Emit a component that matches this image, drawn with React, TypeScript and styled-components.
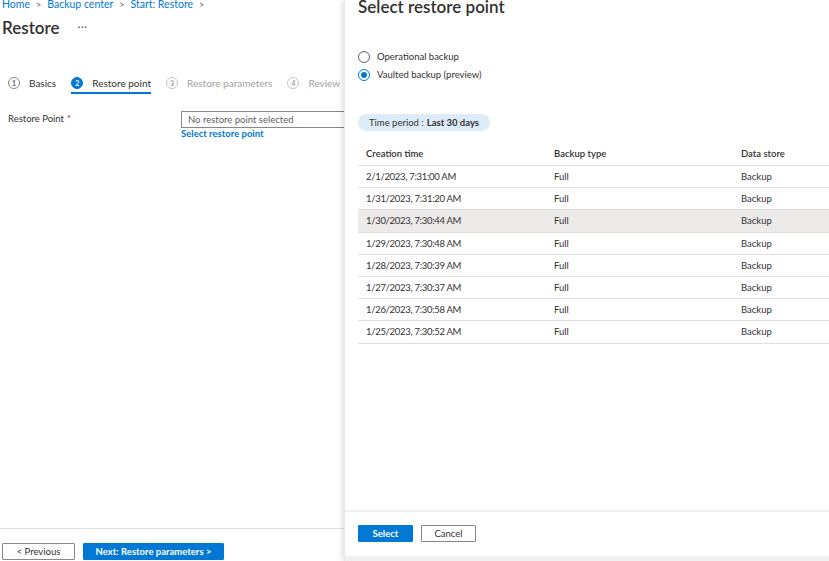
import React from "react";
import styled, { createGlobalStyle } from "styled-components";

const Global = createGlobalStyle`
  html, body { margin: 0; padding: 0; background: #fff; }
  body { font-family: "Segoe UI", Lato, "Open Sans", sans-serif; color: #323130; }
  * { box-sizing: border-box; }
`;

const Root = styled.div`
  display: flex;
  width: 829px;
  height: 561px;
  overflow: hidden;
  white-space: nowrap;
`;

const Left = styled.div`
  width: 344px;
  flex: none;
  display: flex;
  flex-direction: column;
`;

const Breadcrumb = styled.div`
  display: flex;
  align-items: center;
  gap: 6px;
  padding-left: 2px;
  margin-top: -4px;
  height: 16px;
  font-size: 10.5px;
  color: #0078d4;
`;

const Chevron = styled.span`
  color: #605e5c;
  font-size: 9px;
`;

const TitleRow = styled.div`
  display: flex;
  align-items: center;
  gap: 18px;
  padding-left: 2px;
  margin-top: 5px;
`;

const PageTitle = styled.h1`
  margin: 0;
  font-size: 17px;
  font-weight: 600;
  color: #323130;
  line-height: 22px;
`;

const Ellipsis = styled.span`
  font-size: 11px;
  color: #605e5c;
  letter-spacing: 0.5px;
  margin-top: -4px;
`;

const Steps = styled.div`
  display: flex;
  gap: 15px;
  padding-left: 8px;
  margin-top: 32px;
`;

const Step = styled.div<{ $active?: boolean; $disabled?: boolean }>`
  display: flex;
  align-items: center;
  gap: 9px;
  height: 23px;
  font-size: 10px;
  color: ${(p) => (p.$disabled ? "#a19f9d" : "#323130")};
  border-bottom: 2px solid ${(p) => (p.$active ? "#0078d4" : "transparent")};
  padding-top: 2px;
`;

const StepNum = styled.span<{ $active?: boolean; $disabled?: boolean }>`
  width: 12px;
  height: 12px;
  border-radius: 50%;
  display: inline-flex;
  align-items: center;
  justify-content: center;
  font-size: 7px;
  font-weight: 700;
  background: ${(p) => (p.$active ? "#0078d4" : "#fff")};
  color: ${(p) => (p.$active ? "#fff" : p.$disabled ? "#a19f9d" : "#605e5c")};
  border: 1px solid ${(p) => (p.$active ? "#0078d4" : p.$disabled ? "#c8c6c4" : "#8a8886")};
`;

const FieldRow = styled.div`
  display: grid;
  grid-template-columns: 173px 1fr;
  padding-left: 8px;
  margin-top: 17px;
`;

const Label = styled.div`
  font-size: 9.5px;
  padding-top: 2px;
  color: #323130;
`;

const Req = styled.span`
  color: #a4262c;
  margin-left: 3px;
`;

const FieldCol = styled.div`
  display: flex;
  flex-direction: column;
`;

const Input = styled.div`
  height: 17px;
  border: 1px solid #8a8886;
  border-right: none;
  font-size: 9.5px;
  color: #605e5c;
  padding-left: 6px;
  line-height: 15px;
`;

const Link = styled.a`
  font-size: 9.5px;
  font-weight: 700;
  color: #0078d4;
  text-decoration: none;
`;

const Spacer = styled.div`
  flex: 1;
`;

const LeftFooter = styled.div`
  border-top: 1px solid #e1dfdd;
  display: flex;
  gap: 8px;
  padding: 14px 0 2px 2px;
  height: 33px;
`;

const Button = styled.button<{ $primary?: boolean; $w: number }>`
  width: ${(p) => p.$w}px;
  height: 17px;
  padding: 0;
  font-family: inherit;
  font-size: 9.5px;
  font-weight: ${(p) => (p.$primary ? 700 : 400)};
  border-radius: 1px;
  border: 1px solid ${(p) => (p.$primary ? "#0078d4" : "#8a8886")};
  background: ${(p) => (p.$primary ? "#0078d4" : "#fff")};
  color: ${(p) => (p.$primary ? "#fff" : "#323130")};
  line-height: 15px;
`;

const Right = styled.div`
  flex: 1;
  display: flex;
  flex-direction: column;
  background: #fff;
  box-shadow: -2px 0 5px rgba(0, 0, 0, 0.12);
  border-left: 1px solid #e8e8e8;
  position: relative;
  z-index: 1;
`;

const Body = styled.div`
  flex: 1;
  padding-left: 13px;
`;

const PanelTitle = styled.h2`
  margin: -5px 0 0 0;
  font-size: 17px;
  font-weight: 600;
  line-height: 24px;
  color: #323130;
`;

const Radios = styled.div`
  display: flex;
  flex-direction: column;
  gap: 5px;
  margin-top: 31px;
`;

const RadioRow = styled.label`
  display: flex;
  align-items: center;
  gap: 7px;
  font-size: 9.5px;
  color: #323130;
  height: 13px;
`;

const RadioCircle = styled.span<{ $checked?: boolean }>`
  width: 12px;
  height: 12px;
  border-radius: 50%;
  border: 1px solid ${(p) => (p.$checked ? "#0078d4" : "#605e5c")};
  display: inline-flex;
  align-items: center;
  justify-content: center;
  &::after {
    content: "";
    width: 6px;
    height: 6px;
    border-radius: 50%;
    background: ${(p) => (p.$checked ? "#0078d4" : "transparent")};
  }
`;

const Pill = styled.div`
  display: inline-flex;
  align-items: center;
  margin-top: 33px;
  height: 17px;
  width: 132px;
  padding-left: 11px;
  border-radius: 9px;
  background: #deecf9;
  font-size: 9.5px;
  color: #323130;
  b { font-weight: 700; margin-left: 3px; }
`;

const Table = styled.div`
  margin-top: 11px;
  display: flex;
  flex-direction: column;
`;

const Row = styled.div<{ $head?: boolean; $hl?: boolean }>`
  display: grid;
  grid-template-columns: 188px 187px 1fr;
  height: ${(p) => (p.$head ? "24px" : "22.2px")};
  align-items: center;
  padding-left: 8px;
  font-size: 9.5px;
  font-weight: ${(p) => (p.$head ? 600 : 400)};
  color: #323130;
  background: ${(p) => (p.$hl ? "#edebe9" : "transparent")};
  border-bottom: 1px solid #e1dfdd;
`;

const DateCell = styled.span`
  letter-spacing: -0.3px;
`;

const RightFooter = styled.div`
  border-top: 2px solid #f0f0f0;
  display: flex;
  gap: 8px;
  padding: 13px 0 0 13px;
  height: 46px;
`;

const BottomStrip = styled.div`
  height: 5px;
  background: #f0f0f0;
`;

const rows = [
  "2/1/2023, 7:31:00 AM",
  "1/31/2023, 7:31:20 AM",
  "1/30/2023, 7:30:44 AM",
  "1/29/2023, 7:30:48 AM",
  "1/28/2023, 7:30:39 AM",
  "1/27/2023, 7:30:37 AM",
  "1/26/2023, 7:30:58 AM",
  "1/25/2023, 7:30:52 AM",
];

export default function App() {
  return (
    <Root>
      <Global />
      <Left>
        <Breadcrumb>
          <span>Home</span>
          <Chevron>&gt;</Chevron>
          <span>Backup center</span>
          <Chevron>&gt;</Chevron>
          <span>Start: Restore</span>
          <Chevron>&gt;</Chevron>
        </Breadcrumb>
        <TitleRow>
          <PageTitle>Restore</PageTitle>
          <Ellipsis>···</Ellipsis>
        </TitleRow>
        <Steps>
          <Step>
            <StepNum>1</StepNum>Basics
          </Step>
          <Step $active>
            <StepNum $active>2</StepNum>Restore point
          </Step>
          <Step $disabled>
            <StepNum $disabled>3</StepNum>Restore parameters
          </Step>
          <Step $disabled>
            <StepNum $disabled>4</StepNum>Review
          </Step>
        </Steps>
        <FieldRow>
          <Label>
            Restore Point<Req>*</Req>
          </Label>
          <FieldCol>
            <Input>No restore point selected</Input>
            <Link>Select restore point</Link>
          </FieldCol>
        </FieldRow>
        <Spacer />
        <LeftFooter>
          <Button $w={73}>&lt; Previous</Button>
          <Button $primary $w={141}>Next: Restore parameters &gt;</Button>
        </LeftFooter>
      </Left>
      <Right>
        <Body>
          <PanelTitle>Select restore point</PanelTitle>
          <Radios>
            <RadioRow>
              <RadioCircle />
              Operational backup
            </RadioRow>
            <RadioRow>
              <RadioCircle $checked />
              Vaulted backup (preview)
            </RadioRow>
          </Radios>
          <Pill>
            Time period : <b>Last 30 days</b>
          </Pill>
          <Table>
            <Row $head>
              <span>Creation time</span>
              <span>Backup type</span>
              <span>Data store</span>
            </Row>
            {rows.map((r, i) => (
              <Row key={r} $hl={i === 2}>
                <DateCell>{r}</DateCell>
                <span>Full</span>
                <span>Backup</span>
              </Row>
            ))}
          </Table>
        </Body>
        <RightFooter>
          <Button $primary $w={55}>Select</Button>
          <Button $w={55}>Cancel</Button>
        </RightFooter>
        <BottomStrip />
      </Right>
    </Root>
  );
}
